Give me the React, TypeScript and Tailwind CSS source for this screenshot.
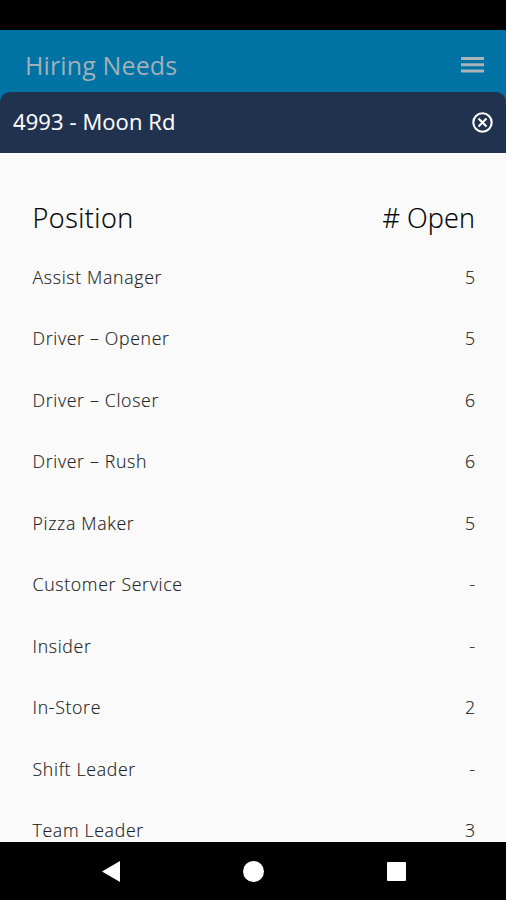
import React from "react";

const rows: [string, string][] = [
  ["Assist Manager", "5"],
  ["Driver – Opener", "5"],
  ["Driver – Closer", "6"],
  ["Driver – Rush", "6"],
  ["Pizza Maker", "5"],
  ["Customer Service", "-"],
  ["Insider", "-"],
  ["In-Store", "2"],
  ["Shift Leader", "-"],
  ["Team Leader", "3"],
];

export default function App() {
  return (
    <div className="flex h-[900px] w-[506px] flex-col overflow-hidden bg-black font-['Open_Sans',sans-serif]">
      <div className="h-[29.5px] shrink-0 bg-black" />
      <div className="flex h-[62.5px] shrink-0 bg-[#0072a3] pt-[8px] pr-[22px] pl-[25px]">
        <h1 className="flex-1 text-[25px] leading-[54px] tracking-[0.13px] text-[#9fb0b8]">Hiring Needs</h1>
        <svg className="mt-[18px] h-[18px] w-[23px]" viewBox="0 0 23 18" fill="#a9b3b8">
          <path d="M0 .9h23v3H0zM0 7.2h23v3H0zM0 13.5h23v3H0z" />
        </svg>
      </div>
      <div className="h-[61px] shrink-0 bg-[#0072a3]">
        <div className="flex h-full items-center justify-between rounded-t-[10px] bg-[#21324f] pr-[13px] pb-[2px] pl-[13px] text-white">
          <h2 className="-mt-[2px] text-[22px] leading-[30px] tracking-[0.08px] [-webkit-text-stroke:0.1px_white]">4993 - Moon Rd</h2>
          <svg className="mt-[1px] h-[21px] w-[21px]" viewBox="0 0 21 21" fill="none" stroke="currentColor" strokeWidth="2.1">
            <circle cx="10.5" cy="10.5" r="9.2" />
            <path d="M6.5 6.5l8 8M14.5 6.5l-8 8" />
          </svg>
        </div>
      </div>
      <main className="h-[688.5px] shrink-0 overflow-hidden bg-[#fafafa] pt-[34px] pr-[31px] pl-[32.5px] text-[#222]">
        <div className="flex h-[59.5px] items-center justify-between pt-[3.5px] text-[27px] font-light text-black [-webkit-text-stroke:0.2px_black]">
          <span className="tracking-[0.5px]">Position</span>
          <span className="tracking-[0.1px]"># Open</span>
        </div>
        {rows.map(([name, count]) => (
          <div key={name} className="flex h-[61.5px] items-center justify-between text-[17.7px] font-light [-webkit-text-stroke:0.15px_#222]">
            <span className="tracking-[0.68px]">{name}</span>
            <span className={count === "-" ? "text-[#555]" : ""}>{count}</span>
          </div>
        ))}
      </main>
      <nav className="flex flex-1 items-center justify-between bg-black pt-[1px] pr-[100px] pl-[102px] text-white">
        <svg className="h-[21px] w-[18px]" viewBox="0 0 18 21" fill="currentColor"><path d="M0 10.5L18 0v21z" /></svg>
        <div className="h-[21px] w-[21px] rounded-full bg-white" />
        <div className="h-[19px] w-[19px] rounded-[1px] bg-white" />
      </nav>
    </div>
  );
}
